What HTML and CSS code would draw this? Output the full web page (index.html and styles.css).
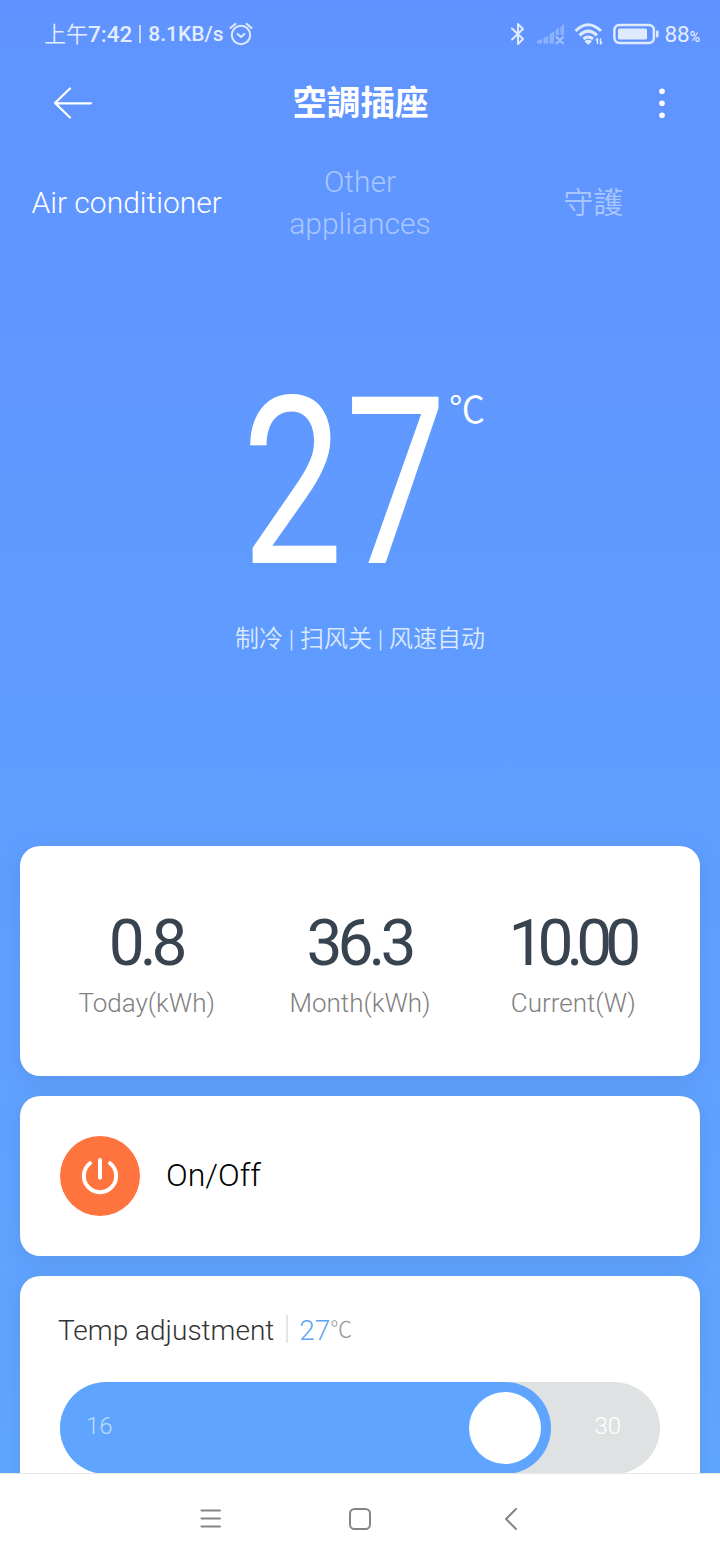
FILE: index.html
```html
<!DOCTYPE html>
<html lang="zh-Hant">
	<head>
		<meta charset="utf-8">
		<title>空調插座</title>
		<meta name="viewport" content="width=device-width, initial-scale=1.0">
		<link rel="stylesheet" href="styles.css">
	</head>
	<body>
		<div class="status">
			<div class="status-left">
				<span class="clock"><span class="ampm">上午</span>7:42</span>
				<span class="sep"></span>
				<span class="speed">8.1KB/s</span>
				<svg class="alarm" width="24" height="24" viewBox="0 0 24 24">
					<circle cx="12" cy="13" r="9.2"/>
					<path d="M1.5 6 L6.5 1.8 M22.5 6 L17.5 1.8 M8.5 12 L12 15 L15.5 12"/>
				</svg>
			</div>
			<div class="status-right">
				<svg class="bluetooth" width="16" height="24" viewBox="0 0 16 24">
					<path d="M2 6.5 L13 17 L8 22 V2 L13 7 L2 17.5"/>
				</svg>
				<svg class="signal" width="28" height="22" viewBox="0 0 28 22">
					<path d="M0 20.5 V18 L5 16 V20.5 Z M6.5 20.5 V15 L11 13 V20.5 Z M12.5 20.5 V11 L17 8.5 V20.5 Z M18.5 12 V7 L22 5 V12 Z M23.5 12 V4 L27 1 V12 Z"/>
					<path class="cross" d="M19.5 14 L26 20.5 M26 14 L19.5 20.5"/>
				</svg>
				<svg class="wifi" width="30" height="24" viewBox="0 0 30 24">
					<path d="M1.5 9 Q14 -3.5 27 9 M5.5 13.3 Q14.2 5 23 13.3 M9.5 17 Q14.2 13 19 17"/>
					<path class="fill" d="M10.5 19.2 Q14.2 16.5 18 19.2 L14.2 23 Z"/>
					<path class="thin" d="M23.5 22 V16.5 L22 18.5 M26.5 16.5 V22 L28 20"/>
				</svg>
				<svg class="battery" width="46" height="22" viewBox="0 0 46 22">
					<rect class="case" x="1.4" y="2" width="39.5" height="18" rx="5"/>
					<rect class="level" x="5" y="5.5" width="29" height="11" rx="1.5"/>
					<rect class="level" x="43" y="7.5" width="2.5" height="7" rx="1"/>
				</svg>
				<span class="percent">88<small>%</small></span>
			</div>
		</div>

		<div class="header">
			<svg class="back" width="40" height="32" viewBox="0 0 40 32">
				<path d="M17 1.5 L2 16 L17 30.5 M2 16.3 H38"/>
			</svg>
			<h1>空調插座</h1>
			<svg class="more" width="8" height="32" viewBox="0 0 8 32">
				<circle cx="4" cy="4.3" r="2.8"/>
				<circle cx="4" cy="16.3" r="2.8"/>
				<circle cx="4" cy="28.3" r="2.8"/>
			</svg>
		</div>

		<div class="tabs">
			<div class="tab active">Air conditioner</div>
			<div class="tab">Other<br>appliances</div>
			<div class="tab cjk">守護</div>
		</div>

		<div class="hero">
			<div class="temp">
				<span class="digits">27</span>
				<span class="unit">℃</span>
			</div>
			<div class="mode" lang="zh-Hans">制冷 | 扫风关 | 风速自动</div>
		</div>

		<div class="cards">
			<div class="card stats">
				<div class="stat">
					<div class="value">0.8</div>
					<div class="label">Today(kWh)</div>
				</div>
				<div class="stat">
					<div class="value">36.3</div>
					<div class="label">Month(kWh)</div>
				</div>
				<div class="stat">
					<div class="value tight">10.00</div>
					<div class="label">Current(W)</div>
				</div>
			</div>

			<div class="card power">
				<div class="power-button">
					<svg width="40" height="40" viewBox="0 0 40 40">
						<path d="M10 7.2 A16.2 16.2 0 1 0 30 7.2 M20 4 V21.8"/>
					</svg>
				</div>
				<div class="power-label">On/Off</div>
			</div>

			<div class="card adjust">
				<div class="adjust-head">
					<span class="adjust-title">Temp adjustment</span>
					<span class="divider"></span>
					<span class="adjust-value">27</span>
					<span class="adjust-unit">℃</span>
				</div>
				<div class="slider">
					<div class="track">
						<span class="min">16</span>
						<div class="knob"></div>
					</div>
					<span class="max">30</span>
				</div>
			</div>
		</div>

		<div class="navbar">
			<svg width="24" height="24" viewBox="0 0 24 24">
				<path d="M4.5 3.5 H23 M4.5 11.5 H23 M4.5 19.5 H23"/>
			</svg>
			<svg width="24" height="24" viewBox="0 0 24 24">
				<rect x="2" y="2" width="20" height="20" rx="4.5"/>
			</svg>
			<svg width="24" height="24" viewBox="0 0 24 24">
				<path d="M17 2 L7 12 L17 22"/>
			</svg>
		</div>
	</body>
</html>
```
FILE: styles.css
```css
* {
	box-sizing: border-box;
}

html {
	height: 100%;
}

body {
	display: flex;
	flex-direction: column;
	width: 720px;
	height: 1560px;
	margin: 0;
	overflow: hidden;
	background: linear-gradient(#6093ff, #5fa6ff 1473px);
	color: #ffffff;
	font-family: Roboto, "Noto Sans CJK TC", sans-serif;
	font-weight: 300;
}

svg {
	display: block;
	flex: none;
	fill: none;
	stroke-linecap: round;
	stroke-linejoin: round;
}

/* status bar */
.status {
	display: flex;
	flex: none;
	justify-content: space-between;
	align-items: center;
	height: 68px;
	padding: 0 20px 0 44px;
	color: #e2edff;
}

.status svg {
	stroke: #dfeaff;
}

.status-left,
.status-right {
	display: flex;
	align-items: center;
}

.clock,
.speed {
	font-size: 21px;
	font-weight: 500;
	line-height: 30px;
}

.clock {
	font-size: 22.5px;
}

.ampm {
	font-size: 22px;
	font-weight: 350;
}

.sep {
	width: 2px;
	height: 18px;
	margin: 0 7px;
	background-color: #c4d9ff;
}

.alarm {
	margin-left: 5px;
	stroke-width: 2;
}

.bluetooth {
	margin-right: 11px;
	stroke-width: 2;
}

.status .signal {
	margin-right: 9px;
	fill: #8bb1ff;
	stroke: none;
}

.status .cross {
	stroke: #a3c2ff;
	stroke-width: 2;
}

.wifi {
	margin-right: 9px;
	stroke-width: 3;
	stroke-linecap: butt;
}

.wifi .fill {
	fill: #dfeaff;
	stroke: none;
}

.wifi .thin {
	stroke-width: 1.4;
}

.battery {
	margin-right: 5px;
}

.battery .case {
	stroke-width: 2.5;
}

.battery .level {
	fill: #dfeaff;
	stroke: none;
}

.percent {
	font-size: 22.5px;
	font-weight: 400;
}

.percent small {
	font-size: 14px;
	font-weight: 500;
}

/* title bar */
.header {
	display: flex;
	flex: none;
	justify-content: space-between;
	align-items: center;
	height: 70px;
	padding: 0 54px 0 53px;
}

.back {
	stroke: #ffffff;
	stroke-width: 2.2;
}

.header h1 {
	margin: 0 0 0 -30px;
	font-size: 34px;
	font-weight: 700;
	line-height: 50px;
}

.more {
	fill: #ffffff;
}

/* tabs */
.tabs {
	display: flex;
	flex: none;
	align-items: center;
	height: 130px;
	padding: 0 10px;
}

.tab {
	flex: 1;
	color: #a9c7ff;
	font-size: 30px;
	line-height: 42px;
	text-align: center;
}

.tab.active {
	color: #ffffff;
}

.tab.cjk {
	font-weight: 350;
}

/* current temperature */
.hero {
	flex: none;
	height: 578px;
	padding-top: 98px;
}

.temp {
	display: flex;
	width: 240px;
	height: 234px;
	margin-left: 242px;
}

.digits {
	flex: none;
	width: 207px;
	font-size: 234px;
	font-weight: 400;
	letter-spacing: 3px;
	line-height: 234px;
	transform: scaleX(0.768);
	transform-origin: 0 0;
}

.unit {
	flex: none;
	font-size: 36px;
	font-weight: 350;
	line-height: 50px;
	margin-top: 20px;
}

.mode {
	margin-top: 21px;
	color: #dbe9ff;
	font-family: Roboto, "Noto Sans CJK SC", sans-serif;
	font-size: 24px;
	font-weight: 350;
	line-height: 36px;
	text-align: center;
}

/* cards */
.cards {
	display: flex;
	flex: 1;
	flex-direction: column;
	gap: 20px;
	min-height: 0;
	padding: 0 20px;
	overflow: hidden;
	margin-top: -30px;
	padding-top: 30px;
}

.card {
	flex: none;
	border-radius: 20px;
	background-color: #ffffff;
	box-shadow: 0 4px 20px rgba(80, 120, 180, 0.25);
}

.stats {
	display: flex;
	height: 230px;
	padding: 60px 20px 0;
}

.stat {
	flex: 1;
	text-align: center;
}

.value {
	padding-right: 2px;
	color: #37434f;
	font-size: 64px;
	font-weight: 400;
	letter-spacing: -5px;
	line-height: 76px;
}

.value.tight {
	padding-right: 4px;
	letter-spacing: -7px;
}

.label {
	color: #808080;
	font-size: 26px;
	line-height: 43px;
}

.power {
	display: flex;
	align-items: center;
	height: 160px;
	padding: 0 40px;
}

.power-button {
	display: flex;
	justify-content: center;
	align-items: center;
	width: 80px;
	height: 80px;
	border-radius: 50%;
	background-color: #ff733f;
}

.power-button svg {
	stroke: #ffffff;
	stroke-width: 4;
}

.power-label {
	margin: -2px 0 0 26px;
	color: #000000;
	font-size: 32px;
}

.adjust {
	height: 240px;
	padding: 33px 40px 0 38px;
}

.adjust-head {
	display: flex;
	align-items: center;
	height: 42px;
}

.adjust-title {
	color: #333333;
	font-size: 28px;
}

.divider {
	width: 2px;
	height: 28px;
	margin: -2px 11px 0 12px;
	background-color: #e5e5e5;
}

.adjust-value {
	color: #5fa5f5;
	font-size: 28px;
}

.adjust-unit {
	color: #999999;
	font-size: 22px;
	line-height: 28px;
}

.slider {
	display: flex;
	justify-content: space-between;
	align-items: center;
	width: 600px;
	height: 92px;
	margin: 31px 0 0 2px;
	border-radius: 46px;
	background-color: #dee2e3;
	font-size: 24px;
}

.track {
	display: flex;
	justify-content: space-between;
	align-items: center;
	width: 491px;
	height: 92px;
	padding: 0 10px 0 26px;
	border-radius: 46px;
	background-color: #5fa5ff;
}

.min {
	margin-top: -4px;
	color: #bcdcf8;
}

.knob {
	width: 72px;
	height: 72px;
	border-radius: 50%;
	background-color: #ffffff;
}

.max {
	margin: -4px 39px 0 0;
	color: #ffffff;
}

/* system navigation */
.navbar {
	display: flex;
	flex: none;
	justify-content: center;
	gap: 127px;
	height: 87px;
	padding-top: 33px;
	border-top: 1px solid #e8e8e8;
	background-color: #ffffff;
}

.navbar svg {
	stroke: #858585;
	stroke-width: 2;
}
```
